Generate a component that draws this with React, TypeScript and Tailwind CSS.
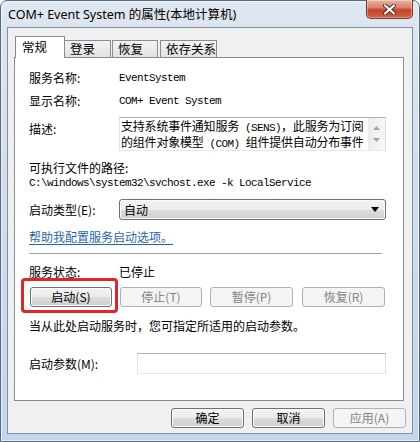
const cjk = "font-['Noto_Sans_CJK_SC',sans-serif]";
const mono = "font-['Liberation_Mono',monospace] text-[11px] tracking-[-0.6px]";

const btn =
  "h-[20px] flex items-center justify-center rounded-[3px] border border-[#707070] bg-[linear-gradient(#f3f3f3_0%,#ebebeb_50%,#dcdcdc_52%,#cfcfcf_100%)] shadow-[inset_0_0_0_1px_#fbfbfb] text-[12px] leading-[16px] text-black";
const btnOff =
  "h-[20px] flex items-center justify-center rounded-[3px] border border-[#adb2b5] bg-[#f4f4f4] text-[12px] leading-[16px] text-[#838383]";

function CloseButton() {
  return (
    <div className="w-[47px] h-[19px] -mt-[1px] flex items-center justify-center rounded-b-[5px] border border-t-0 border-[#6e3b33] bg-[linear-gradient(#eab3a3_0%,#d9826b_42%,#c2432a_55%,#d4623f_100%)] shadow-[inset_0_0_0_1px_rgba(255,255,255,0.35)]">
      <svg width="13" height="11" viewBox="0 0 13 11">
        <path d="M2 1.5 L11 9.5 M11 1.5 L2 9.5" stroke="#4a2a24" strokeWidth="4" strokeLinecap="round" />
        <path d="M2 1.5 L11 9.5 M11 1.5 L2 9.5" stroke="#ffffff" strokeWidth="2.2" strokeLinecap="round" />
      </svg>
    </div>
  );
}

function Label({ children }: { children: React.ReactNode }) {
  return <span className="w-[90px] shrink-0 text-[12px] leading-[16px]">{children}</span>;
}

export default function App() {
  return (
    <div className={`w-[420px] h-[442px] ${cjk} text-black`}>
      <div className="w-[420px] h-[442px] flex flex-col rounded-t-[7px] border border-[#56687f] bg-[linear-gradient(#dfe7f0_0%,#d2deeb_40%,#c4d6eb_100%)] shadow-[inset_0_0_0_1px_rgba(255,255,255,0.6)]">
        {/* title bar */}
        <div className="h-[26px] shrink-0 flex items-start justify-between pl-[7px] pr-[6px]">
          <span className="mt-[5px] text-[12.5px] leading-[18px] font-['Noto_Sans','Noto_Sans_CJK_SC',sans-serif]">
            COM+ Event System 的属性(本地计算机)
          </span>
          <CloseButton />
        </div>

        {/* client area */}
        <div className="mx-[6px] h-[407px] shrink-0 border border-[#7e90a8] bg-[#f0f0f0] pt-[8px] pl-[6px] flex flex-col">
          {/* tabs */}
          <div className="h-[21px] flex items-end text-[12.5px] leading-[16px]">
            <div className="relative z-10 -mb-[1px] ml-[1px] w-[50px] h-[22px] bg-white border border-b-0 border-[#898c95] pl-[6px] pt-[2px]">
              常规
            </div>
            <div className="w-[46px] h-[17px] border border-b-0 border-l-0 border-[#898c95] bg-[linear-gradient(#f3f3f3,#e2e2e2)] pl-[5px]">
              登录
            </div>
            <div className="ml-[1px] w-[46px] h-[17px] border border-b-0 border-[#898c95] bg-[linear-gradient(#f3f3f3,#e2e2e2)] pl-[5px]">
              恢复
            </div>
            <div className="ml-[2px] w-[57px] h-[17px] border border-b-0 border-[#898c95] bg-[linear-gradient(#f3f3f3,#e2e2e2)] pl-[5px]">
              依存关系
            </div>
          </div>

          {/* page */}
          <div className="w-[390px] h-[344px] border border-[#898c95] bg-white pl-[14px] flex flex-col">
            <div className="mt-[10px] h-[20px] flex items-center">
              <Label>服务名称:</Label>
              <span className={mono}>EventSystem</span>
            </div>
            <div className="mt-[3px] h-[20px] flex items-center">
              <Label>显示名称:</Label>
              <span className={mono}>COM+ Event System</span>
            </div>
            <div className="mt-[6px] h-[34px] flex items-start">
              <span className="mt-[4px] w-[90px] shrink-0 text-[12px] leading-[16px]">描述:</span>
              <div className="w-[267px] h-[34px] flex border border-[#abadb3] border-l-[#e2e3ea] border-r-[#dbdfe6] border-b-[#e3e9ef] bg-white">
                <div className="flex-1 pl-[1px] pt-[1px] overflow-hidden text-[12px] leading-[14px] tracking-[-0.2px] whitespace-nowrap">
                  <div>
                    支持系统事件通知服务<span className={mono}> (SENS)</span>，此服务为订阅
                  </div>
                  <div>
                    的组件对象模型<span className={mono}> (COM) </span>组件提供自动分布事件
                  </div>
                </div>
                <div className="w-[17px] shrink-0 bg-[linear-gradient(90deg,#ececec,#f8f8f8)] flex flex-col items-center justify-between py-[8px]">
                  <svg width="7" height="4" viewBox="0 0 7 4">
                    <path d="M0 4 L3.5 0 L7 4 Z" fill="#a3a3a3" />
                  </svg>
                  <svg width="7" height="4" viewBox="0 0 7 4">
                    <path d="M0 0 L3.5 4 L7 0 Z" fill="#a3a3a3" />
                  </svg>
                </div>
              </div>
            </div>
            <div className="mt-[9px] h-[16px] flex items-center text-[12px] leading-[16px]">可执行文件的路径:</div>
            <div className={`h-[14px] flex items-center ${mono}`}>C:\windows\system32\svchost.exe -k LocalService</div>
            <div className="mt-[9px] h-[21px] flex items-center">
              <Label>启动类型(E):</Label>
              <div className="w-[267px] h-[21px] flex items-center justify-between rounded-[3px] border border-[#707070] bg-[linear-gradient(#f3f3f3_0%,#ebebeb_50%,#dddddd_52%,#d0d0d0_100%)] shadow-[inset_0_0_0_1px_#fbfbfb] pl-[4px] pr-[6px] text-[12px] leading-[16px]">
                <span>自动</span>
                <svg width="8" height="5" viewBox="0 0 8 5">
                  <path d="M0 0 L8 0 L4 5 Z" fill="#000000" />
                </svg>
              </div>
            </div>
            <div className="mt-[9px] h-[16px] flex items-center">
              <span className="text-[12px] leading-[16px] text-[#1f66b2] underline underline-offset-2">帮助我配置服务启动选项。</span>
            </div>
            <div className="mt-[8px] w-[353px] h-[1px] bg-[#a0a0a0]" />
            <div className="mt-[10px] h-[16px] flex items-center">
              <Label>服务状态:</Label>
              <span className="text-[12px] leading-[16px]">已停止</span>
            </div>
            <div className="relative mt-[7px] h-[20px] flex gap-[8px] pl-[1px]">
              <div className={`${btn} w-[82px]`}>启动(S)</div>
              <div className={`${btnOff} w-[82px]`}>停止(T)</div>
              <div className={`${btnOff} w-[83px]`}>暂停(P)</div>
              <div className={`${btnOff} w-[83px] ml-[1px]`}>恢复(R)</div>
              <div className="absolute -left-[8px] -top-[9px] w-[97px] h-[35px] rounded-[4px] border-[3px] border-[#e0262a]" />
            </div>
            <div className="mt-[11px] h-[16px] flex items-center text-[12px] leading-[16px]">
              当从此处启动服务时，您可指定所适用的启动参数。
            </div>
            <div className="mt-[19px] h-[21px] flex items-center">
              <span className="w-[108px] shrink-0 text-[12px] leading-[16px]">启动参数(M):</span>
              <div className="w-[249px] h-[21px] border border-[#abadb3] border-l-[#e2e3ea] border-r-[#dbdfe6] border-b-[#e3e9ef] bg-white" />
            </div>
          </div>

          {/* dialog buttons */}
          <div className="mt-[7px] h-[20px] flex justify-end gap-[8px] pr-[6px]">
            <div className={`${btn} w-[73px]`}>确定</div>
            <div className={`${btn} w-[73px]`}>取消</div>
            <div className={`${btnOff} w-[73px]`}>应用(A)</div>
          </div>
        </div>
      </div>
    </div>
  );
}
